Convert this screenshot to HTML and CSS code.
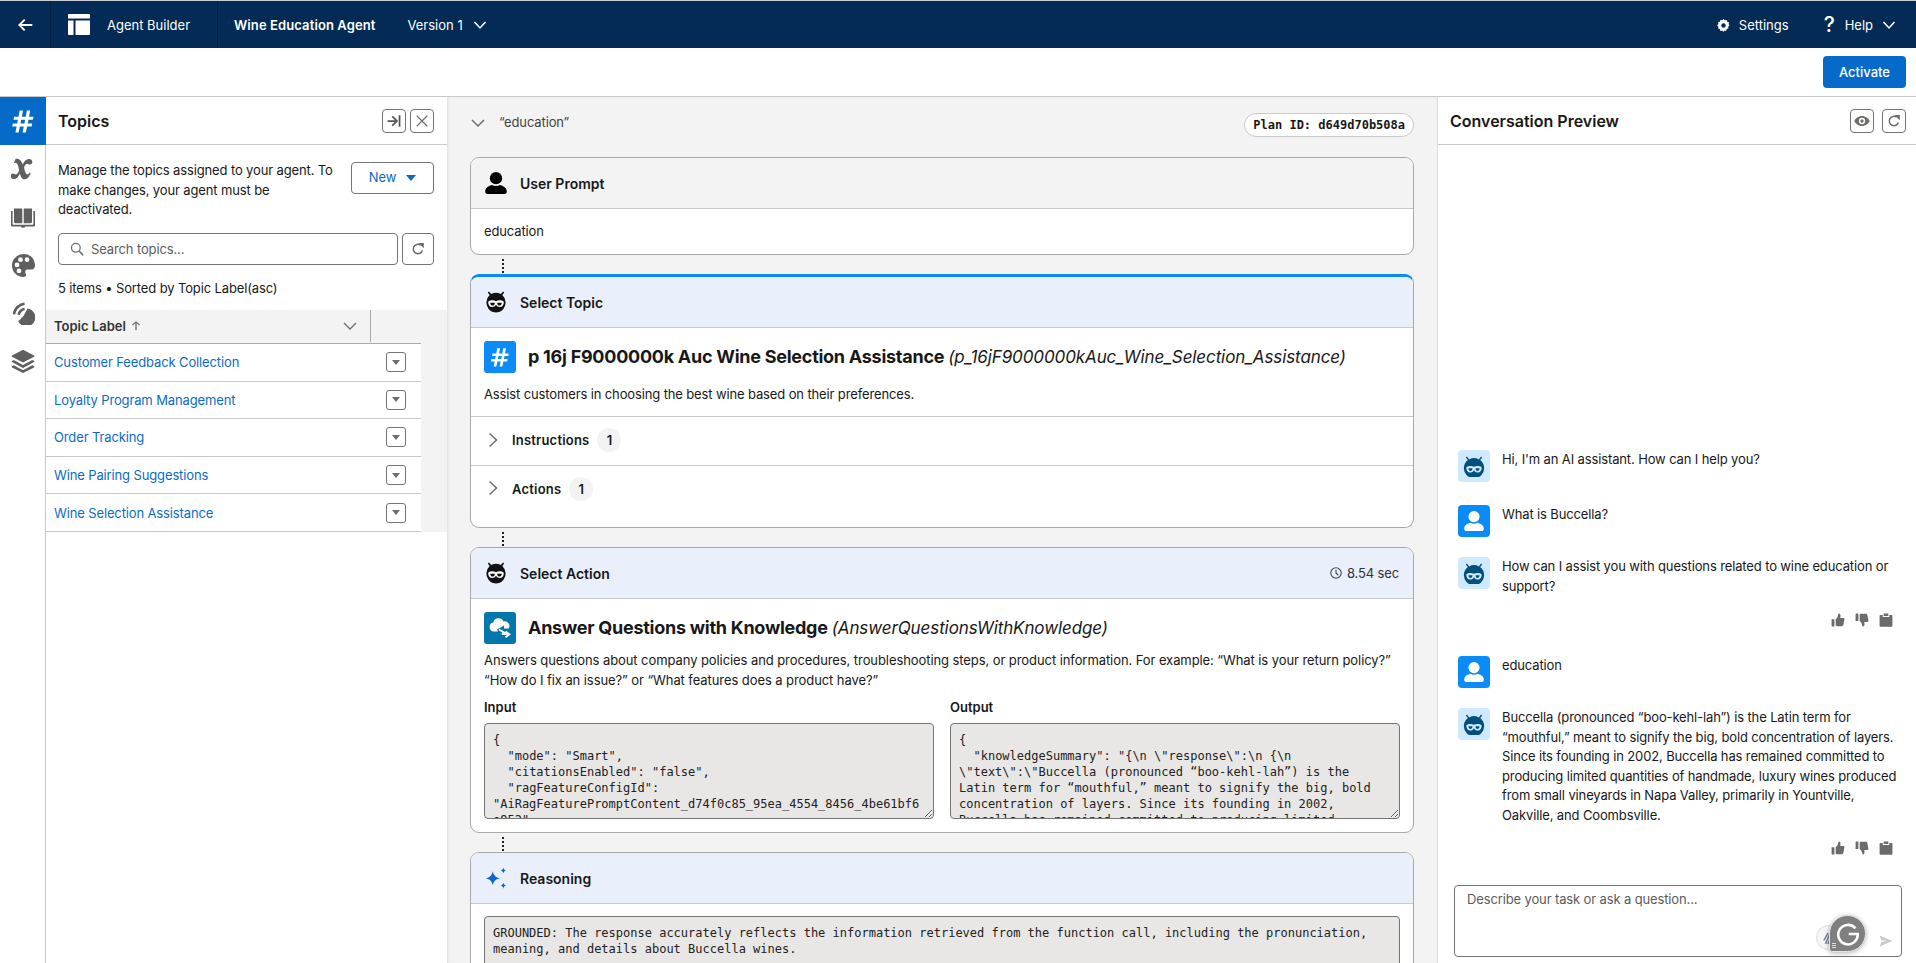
FILE: index.html
```html
<!DOCTYPE html>
<html lang="en">
<head>
<meta charset="utf-8">
<title>Agent Builder</title>
<link rel="stylesheet" href="styles.css">
</head>
<body>
<svg class="defs" width="0" height="0" aria-hidden="true">
  <symbol id="i-bot" viewBox="1 1 22 23">
    <path d="M4.600 1.600 7 4.200a10.400 10.400 0 0 1 10 0l2.400-2.600 1.200 1-2 2.700A10.600 10.600 0 0 1 12 23.600 10.600 10.600 0 0 1 5.400 5.300l-2-2.700z" fill="#111"/>
    <path d="M3.800 12.200c2.400-1.800 5.600-1.800 8.200-.6 2.600-1.200 5.800-1.200 8.200.6-.1 3.400-1.500 5.600-4.200 5.600-1.800 0-3-1-4-2.400-1 1.400-2.200 2.400-4 2.400-2.700 0-4.100-2.200-4.200-5.600z" fill="#fff"/>
    <path d="M6 13.200h4.800c0 1.800-1 3-2.400 3S6 15 6 13.200zm7.200 0H18c0 1.800-1 3-2.400 3s-2.400-1.200-2.400-3z" fill="#111"/>
  </symbol>
  <symbol id="i-bot-blue" viewBox="2 2 20 20">
    <path d="M5.600 3.400 7.600 6a9 9 0 0 1 8.800 0l2-2.600 1 .8-1.800 2.400A9.200 9.200 0 1 1 6.400 6.600L4.600 4.200z" fill="#04507d"/>
    <path d="M5 13.200c2-1.500 4.600-1.500 7-.5 2.400-1 5-1 7 .5 0 2.800-1.200 4.800-3.500 4.800-1.600 0-2.700-.9-3.500-2.100-.8 1.200-1.900 2.100-3.500 2.100C6.200 18 5 16 5 13.200z" fill="#cfe9fe"/>
    <path d="M7 14h3.600c0 1.500-.8 2.500-1.800 2.500S7 15.500 7 14zm6.400 0H17c0 1.500-.8 2.500-1.800 2.500s-1.800-1-1.800-2.500z" fill="#04507d"/>
  </symbol>
  <symbol id="i-person" viewBox="1.500 2 21 21.500">
    <circle cx="12" cy="8" r="6"/>
    <path d="M1.500 20.500c0-3.600 5-5.500 6.700-5.800 2.300 1.400 5.300 1.400 7.600 0 1.700.3 6.700 2.200 6.700 5.800v.8c0 1.300-1 2.200-2.200 2.200H3.700c-1.200 0-2.200-.9-2.200-2.200z"/>
  </symbol>
  <symbol id="i-hash" viewBox="0 0 24 24">
    <path d="M8.700 1.500h3.300L10.800 7.700h3.900l1.200-6.200h3.300L18 7.700h4.500l-.6 3H17.400l-.7 3.700h4.500l-.6 3h-4.500l-1.300 6.100h-3.300l1.200-6.100H8.900l-1.300 6.100H4.400l1.200-6.100H1.200l.6-3h4.400l.7-3.700H2.500l.6-3h4.400zm1.500 9.200-.7 3.700h3.900l.7-3.700z"/>
  </symbol>
  <symbol id="i-fx" viewBox="0 0 24 24">
    <path d="M4.700 1.800c3.700-.6 5.800 1.900 7 5.700 1.400-3.100 3.700-5.400 6.100-5.400 2.200 0 3.500 1.300 3.500 3 0 1.500-1 2.500-2.300 2.500-1.400 0-1.900-.9-2.900-.9-1.300 0-2.500 2.200-3.100 3.600.6 2.800 1.500 7.100 3.500 7.100.8 0 1.500-.9 2-2l1.200.6c-1.100 3.300-3.300 6.300-6.300 6.300-2.700 0-3.700-2.900-4.500-5.800-1.300 3-3.400 5.600-6 5.600-2 0-3.300-1.300-3.300-3 0-1.500 1-2.500 2.300-2.500 1.500 0 1.800 1 2.900 1 1.400 0 2.800-2.800 3.300-4.200-.7-3.700-1.300-7.600-3.600-7.600-.9 0-1.300.4-1.900.8z"/>
  </symbol>
  <symbol id="i-book" viewBox="0 0 24 24">
    <path d="M3 3.500h7c.9 0 1.300.5 1.300 1.200v13.500H4.200c-.7 0-1.200-.5-1.200-1.200zm18 0h-7c-.9 0-1.300.5-1.300 1.200v13.500h7.100c.7 0 1.200-.5 1.200-1.200z"/>
    <path d="M0 6h1.600v12.700c0 .6.400 1 1 1h18.800c.6 0 1-.4 1-1V6H24v14c0 1-.7 1.500-1.500 1.500h-8.300c-.2.800-.5 1.200-1.200 1.200h-2c-.7 0-1-.4-1.200-1.200H1.500C.7 21.500 0 21 0 20z"/>
  </symbol>
  <symbol id="i-palette" viewBox="0 0 24 24">
    <path fill-rule="evenodd" d="M13 1C6 1 1 6.200 1 12.500S6 24 12.300 24c2.700 0 3.300-1.900 2.400-3.400-1.100-1.900-.3-4.100 2-4.100h3.800c2 0 3.500-1.700 3.500-3.800C24 6 19.500 1 13 1zM6 14.300a2.400 2.400 0 1 1 0-4.800 2.400 2.400 0 0 1 0 4.800zm2 6a2.400 2.400 0 1 1 0-4.800 2.400 2.400 0 0 1 0 4.800zm1.500-11.200a2.400 2.400 0 1 1 0-4.800 2.400 2.400 0 0 1 0 4.800zm6.500 0a2.400 2.400 0 1 1 0-4.800 2.400 2.400 0 0 1 0 4.800z"/>
  </symbol>
  <symbol id="i-signal" viewBox="0 0 24 24">
    <path d="M16.500 7.500a9 9 0 1 1-9.300 12.800c1.500-1.200 3.200-3 5.300-5.200z"/>
    <path d="M1.700 13.200C2.400 6.800 7.200 2.200 13.400 1.400l.3 2.500C8.700 4.700 5 8.300 4.300 13.500zm4.700.5c.6-3.700 3.300-6.400 7-7l.4 2.500c-2.500.4-4.300 2.200-4.800 4.900z"/>
  </symbol>
  <symbol id="i-layers" viewBox="0 0 24 24">
    <path d="M12 .8 23 6.600c.5.300.5.900 0 1.200l-11 5.800L1 7.800c-.5-.3-.5-.9 0-1.200z"/>
    <path d="m2.700 11 9.300 4.900 9.300-4.900 1.700.9c.5.300.5.900 0 1.200L12 19 1 13.100c-.5-.3-.5-.9 0-1.200z"/>
    <path d="m2.700 16.300 9.300 4.900 9.300-4.900 1.700.9c.5.300.5.900 0 1.200L12 24 1 18.400c-.5-.3-.5-.9 0-1.200z"/>
  </symbol>
  <symbol id="i-refresh" viewBox="0 0 24 24">
    <path fill="none" stroke="currentColor" stroke-width="2.600" d="M19.500 14.500A8 8 0 1 1 16.500 5.500"/>
    <path d="M13 1.500h9v9z"/>
  </symbol>
  <symbol id="i-up" viewBox="0 0 24 24">
    <path d="M13.600 4.900v17.400h-3.200V4.900L4.700 10.600 2.500 8.300 12 .8l9.500 7.500-2.200 2.300z"/>
  </symbol>
  <symbol id="i-thumbup" viewBox="0 0 24 24">
    <path d="M1 10.500h3.800c.6 0 1 .4 1 1V22c0 .6-.4 1-1 1H2c-.6 0-1-.4-1-1zM8 10.300c2-1 4-3.700 4.600-8.300.1-.8.600-1.200 1.300-1.100 2 .3 2.700 2.400 2.300 5.100l-.4 2.500H21c1.400 0 2.300 1.200 2 2.500l-1.900 9.700c-.3 1.200-1.200 2-2.400 2H10c-1.100 0-2-.9-2-2z"/>
  </symbol>
  <symbol id="i-thumbdown" viewBox="0 0 24 24">
    <path d="M1 13.500h3.800c.6 0 1-.4 1-1V2c0-.6-.4-1-1-1H2c-.6 0-1 .4-1 1zM8 13.700c2 1 4 3.700 4.600 8.300.1.800.6 1.200 1.300 1.100 2-.3 2.700-2.400 2.300-5.100l-.4-2.500H21c1.400 0 2.300-1.200 2-2.500l-1.900-9.700c-.3-1.200-1.200-2-2.400-2H10c-1.100 0-2 .9-2 2z"/>
  </symbol>
  <symbol id="i-clip" viewBox="0 0 24 24">
    <path d="M8 .8h8v4.400H8z"/>
    <path d="M2.500 3.500h3.900v3.300h11.200V3.500h3.900c.9 0 1.500.6 1.500 1.500v17c0 .9-.6 1.500-1.500 1.500H2.500C1.600 23.500 1 22.900 1 22V5c0-.9.600-1.500 1.500-1.500z"/>
  </symbol>
</svg>

<header class="topbar">
  <button class="back" type="button" aria-label="Back">
    <svg class="ico-16" viewBox="0 0 24 24"><path d="M23 12H4m7.500-8L3.500 12l8 8" fill="none" stroke="#fff" stroke-width="2.800"/></svg>
  </button>
  <div class="brand">
    <svg class="brand-logo" viewBox="0 0 22 21"><path d="M1 0h20c.6 0 1 .4 1 1v3.500H0V1c0-.6.400-1 1-1zM0 6.500h5.500V21H1c-.6 0-1-.4-1-1zm7.500 0H22V20c0 .6-.4 1-1 1H7.500z" fill="#fff"/></svg>
    <span>Agent Builder</span>
  </div>
  <div class="agent">
    <strong>Wine Education Agent</strong>
    <span class="version">Version 1</span>
    <svg class="chev-w" viewBox="0 0 14 14"><path d="M1.500 4 7 10l5.500-6" fill="none" stroke="#fff" stroke-width="1.500"/></svg>
  </div>
  <div class="top-right">
    <span class="top-item">
      <svg class="ico-13" viewBox="0 0 24 24"><path fill="#fff" fill-rule="evenodd" d="M12 0l2.600 2.800 3.700-.9 1.100 3.700 3.600 1.100-.8 3.700L24 13l-2.800 2.600.8 3.700-3.600 1.100-1.100 3.600-3.700-.9L12 26l-2.600-2.900-3.700.9-1.100-3.600L1 19.300l.8-3.700L-1 13l2.800-2.600-.8-3.700 3.600-1.100L5.700 1.900l3.700.9zM12 8.500a4.500 4.500 0 1 0 0 9 4.500 4.500 0 0 0 0-9z" transform="translate(1 .8) scale(.92)"/></svg>
      Settings
    </span>
    <span class="top-item top-help">
      <span class="qmark">?</span>
      Help
      <svg class="chev-w chev-help" viewBox="0 0 14 14"><path d="M1.500 4 7 10l5.500-6" fill="none" stroke="#fff" stroke-width="1.500"/></svg>
    </span>
  </div>
</header>

<div class="actionbar">
  <button class="primary" type="button">Activate</button>
</div>

<main class="workspace">
  <nav class="rail">
    <a class="rail-item rail-active"><svg class="ico-24"><use href="#i-hash"/></svg></a>
    <a class="rail-item"><svg class="ico-24"><use href="#i-fx"/></svg></a>
    <a class="rail-item"><svg class="ico-24"><use href="#i-book"/></svg></a>
    <a class="rail-item"><svg class="ico-24"><use href="#i-palette"/></svg></a>
    <a class="rail-item"><svg class="ico-24"><use href="#i-signal"/></svg></a>
    <a class="rail-item"><svg class="ico-24"><use href="#i-layers"/></svg></a>
  </nav>

  <aside class="topics">
    <div class="panel-head panel-head-topics">
      <h2>Topics</h2>
      <div class="icon-btns">
        <button class="icon-btn" type="button" aria-label="Collapse">
          <svg class="ico-14" viewBox="0 0 24 24"><path d="M1 12h15m-7-8 8 8-8 8M21.500 2v20" fill="none" stroke="#555" stroke-width="3"/></svg>
        </button>
        <button class="icon-btn" type="button" aria-label="Close">
          <svg class="ico-14" viewBox="0 0 24 24"><path d="m3 3 18 18M21 3 3 21" fill="none" stroke="#706e6b" stroke-width="2"/></svg>
        </button>
      </div>
    </div>
    <div class="intro">
      <p>Manage the topics assigned to your agent. To make changes, your agent must be deactivated.</p>
      <button class="new-btn" type="button">New <span class="caret-blue"></span></button>
    </div>
    <div class="search-row">
      <label class="search">
        <svg class="ico-14" viewBox="0 0 24 24"><circle cx="10" cy="10" r="7.500" fill="none" stroke="#706e6b" stroke-width="2.200"/><path d="m15.500 15.500 7 7" stroke="#706e6b" stroke-width="2.600"/></svg>
        <span>Search topics...</span>
      </label>
      <button class="refresh-btn" type="button" aria-label="Refresh"><svg class="ico-14 gray"><use href="#i-refresh"/></svg></button>
    </div>
    <p class="summary">5 items • Sorted by Topic Label(asc)</p>
    <div class="table">
      <div class="thead">
        <div class="th">
          <span class="th-label">Topic Label</span>
          <svg class="ico-up gray"><use href="#i-up"/></svg>
          <svg class="th-chev" viewBox="0 0 14 14"><path d="M1 4 7 10l6-6" fill="none" stroke="#706e6b" stroke-width="1.300"/></svg>
        </div>
      </div>
      <ul class="rows">
        <li class="row"><a>Customer Feedback Collection</a><button class="menu-btn" type="button" aria-label="Show actions"><span class="caret-gray"></span></button></li>
        <li class="row"><a>Loyalty Program Management</a><button class="menu-btn" type="button" aria-label="Show actions"><span class="caret-gray"></span></button></li>
        <li class="row"><a>Order Tracking</a><button class="menu-btn" type="button" aria-label="Show actions"><span class="caret-gray"></span></button></li>
        <li class="row"><a>Wine Pairing Suggestions</a><button class="menu-btn" type="button" aria-label="Show actions"><span class="caret-gray"></span></button></li>
        <li class="row"><a>Wine Selection Assistance</a><button class="menu-btn" type="button" aria-label="Show actions"><span class="caret-gray"></span></button></li>
      </ul>
    </div>
  </aside>

  <section class="trace">
    <div class="trace-head">
      <svg class="th-chev dark" viewBox="0 0 14 14"><path d="M1 4 7 10l6-6" fill="none" stroke="#706e6b" stroke-width="1.500"/></svg>
      <span class="trace-q">“education”</span>
      <span class="plan">Plan ID: d649d70b508a</span>
    </div>

    <article class="card">
      <div class="card-head head-gray">
        <svg class="ico-22"><use href="#i-person"/></svg>
        <h3>User Prompt</h3>
      </div>
      <div class="prompt-body">education</div>
    </article>
    <div class="link"></div>

    <article class="card card-active">
      <div class="card-head">
        <svg class="ico-22"><use href="#i-bot"/></svg>
        <h3>Select Topic</h3>
      </div>
      <div class="card-title">
        <span class="tile tile-blue"><svg class="ico-20 white"><use href="#i-hash"/></svg></span>
        <h4>p 16j F9000000k Auc Wine Selection Assistance <em>(p_16jF9000000kAuc_Wine_Selection_Assistance)</em></h4>
      </div>
      <p class="card-desc">Assist customers in choosing the best wine based on their preferences.</p>
      <div class="acc acc-first">
        <svg class="acc-chev" viewBox="0 0 10 16"><path d="m1.500 1.500 7 6.500-7 6.500" fill="none" stroke="#706e6b" stroke-width="1.500"/></svg>
        <span class="acc-label">Instructions</span><span class="pill">1</span>
      </div>
      <div class="acc acc-last">
        <svg class="acc-chev" viewBox="0 0 10 16"><path d="m1.500 1.500 7 6.500-7 6.500" fill="none" stroke="#706e6b" stroke-width="1.500"/></svg>
        <span class="acc-label">Actions</span><span class="pill">1</span>
      </div>
    </article>
    <div class="link"></div>

    <article class="card">
      <div class="card-head">
        <svg class="ico-22"><use href="#i-bot"/></svg>
        <h3>Select Action</h3>
        <span class="timing">
          <svg class="ico-12" viewBox="0 0 24 24"><circle cx="12" cy="12" r="10.500" fill="none" stroke="#444" stroke-width="2.200"/><path d="M12 5.500V12l4.500 4.500" fill="none" stroke="#444" stroke-width="2.200"/></svg>
          8.54 sec
        </span>
      </div>
      <div class="card-title">
        <span class="tile tile-teal">
          <svg class="ico-24" viewBox="0 0 24 24"><path d="M6 15.500a4.500 4.500 0 0 1-.8-8.900A5.500 5.500 0 0 1 15.500 5.400a4.800 4.800 0 0 1 6 4.600 4.200 4.200 0 0 1-.8 2.500H16V9.500l-7 4 1 2z" fill="#fff"/><path d="m11 13.500 5.500 3.200-2.500 1.300h7M17.500 15.500l4 2.800-4 3" fill="none" stroke="#fff" stroke-width="1.800"/></svg>
        </span>
        <h4>Answer Questions with Knowledge <em>(AnswerQuestionsWithKnowledge)</em></h4>
      </div>
      <p class="card-desc desc-wide">Answers questions about company policies and procedures, troubleshooting steps, or product information. For example: “What is your return policy?” “How do I fix an issue?” or “What features does a product have?”</p>
      <div class="io">
        <div class="io-col">
          <label class="io-label">Input</label>
          <div class="code">{
  "mode": "Smart",
  "citationsEnabled": "false",
  "ragFeatureConfigId":
"AiRagFeaturePromptContent_d74f0c85_95ea_4554_8456_4be61bf6e952",
  "retrieverMode": "Smart"
}</div>
        </div>
        <div class="io-col">
          <label class="io-label">Output</label>
          <div class="code">{
  "knowledgeSummary": "{\n \"response\":\n {\n \"text\":\"Buccella (pronounced “boo-kehl-lah”) is the Latin term for “mouthful,” meant to signify the big, bold concentration of layers. Since its founding in 2002, Buccella has remained committed to producing limited quantities of handmade wines"
}</div>
        </div>
      </div>
    </article>
    <div class="link"></div>

    <article class="card">
      <div class="card-head">
        <svg class="ico-22" viewBox="0 0 24 24"><path fill="#0a66c8" d="M8.500 4.500c1 4.600 3 6.700 7.800 7.700-4.800 1-6.800 3.100-7.800 7.800-1-4.700-3-6.800-7.800-7.800 4.800-1 6.800-3.100 7.800-7.700zM20 .5c.4 2 1.200 2.900 3.200 3.300-2 .4-2.800 1.300-3.200 3.300-.4-2-1.200-2.900-3.200-3.300 2-.4 2.800-1.300 3.200-3.300zM20 17c.4 2 1.200 2.900 3.200 3.300-2 .4-2.800 1.300-3.200 3.300-.4-2-1.200-2.900-3.200-3.300 2-.4 2.800-1.300 3.200-3.300z"/></svg>
        <h3>Reasoning</h3>
      </div>
      <div class="reason">
        <div class="code code-full">GROUNDED: The response accurately reflects the information retrieved from the function call, including the pronunciation, meaning, and details about Buccella wines.</div>
      </div>
    </article>
  </section>

  <aside class="preview">
    <div class="panel-head panel-head-preview">
      <h2>Conversation Preview</h2>
      <div class="icon-btns icon-btns-wide">
        <button class="icon-btn" type="button" aria-label="Preview">
          <svg class="ico-16" viewBox="0 0 24 24"><path fill="#706e6b" fill-rule="evenodd" d="M12 4.500c5.500 0 9.800 3.600 11.500 7.500-1.700 3.900-6 7.500-11.500 7.500S2.200 15.900.5 12C2.200 8.100 6.500 4.500 12 4.500zm0 2.800a4.700 4.700 0 1 0 0 9.400 4.700 4.700 0 0 0 0-9.400zm0 2.200a2.500 2.500 0 1 1 0 5 2.500 2.500 0 0 1 0-5z"/></svg>
        </button>
        <button class="icon-btn" type="button" aria-label="Refresh"><svg class="ico-14 gray"><use href="#i-refresh"/></svg></button>
      </div>
    </div>
    <div class="chat">
      <div class="msg msg-1">
        <span class="avatar av-bot"><svg class="ico-22"><use href="#i-bot-blue"/></svg></span>
        <p>Hi, I'm an AI assistant. How can I help you?</p>
      </div>
      <div class="msg msg-2">
        <span class="avatar av-user"><svg class="ico-20 white"><use href="#i-person"/></svg></span>
        <p>What is Buccella?</p>
      </div>
      <div class="msg">
        <span class="avatar av-bot"><svg class="ico-22"><use href="#i-bot-blue"/></svg></span>
        <p>How can I assist you with questions related to wine education or support?</p>
      </div>
      <div class="feedback">
        <svg class="ico-14 gray"><use href="#i-thumbup"/></svg>
        <svg class="ico-14 gray"><use href="#i-thumbdown"/></svg>
        <svg class="ico-14 gray"><use href="#i-clip"/></svg>
      </div>
      <div class="msg msg-4">
        <span class="avatar av-user"><svg class="ico-20 white"><use href="#i-person"/></svg></span>
        <p>education</p>
      </div>
      <div class="msg">
        <span class="avatar av-bot"><svg class="ico-22"><use href="#i-bot-blue"/></svg></span>
        <p>Buccella (pronounced “boo-kehl-lah”) is the Latin term for “mouthful,” meant to signify the big, bold concentration of layers. Since its founding in 2002, Buccella has remained committed to producing limited quantities of handmade, luxury wines produced from small vineyards in Napa Valley, primarily in Yountville, Oakville, and Coombsville.</p>
      </div>
      <div class="feedback feedback-last">
        <svg class="ico-14 gray"><use href="#i-thumbup"/></svg>
        <svg class="ico-14 gray"><use href="#i-thumbdown"/></svg>
        <svg class="ico-14 gray"><use href="#i-clip"/></svg>
      </div>
    </div>
    <div class="composer">
      <span class="placeholder">Describe your task or ask a question...</span>
      <svg class="send" viewBox="0 0 24 24"><path d="M1 2.500 23 12 1 21.500l3-8 10-1.500-10-1.500z" fill="#c9c9c9"/></svg>
      <span class="g-back"><svg class="g-slash" viewBox="0 0 12 16"><path d="M9 1 3 15M11 4 6 15M6 2 1 11" fill="none" stroke="#6f7f93" stroke-width="1.800"/></svg></span>
      <span class="g-badge"><svg class="g-mark" viewBox="0 0 32 32"><path d="M26 8.500A13 13 0 1 0 29 16H17" fill="none" stroke="#fff" stroke-width="3.400"/></svg><span class="g-grip"></span></span>
    </div>
  </aside>
</main>
</body>
</html>
```

FILE: styles.css
```css
* { box-sizing: border-box; }
html, body { height: 100%; }
body {
  margin: 0;
  overflow: hidden;
  background: #fff;
  color: #181818;
  font-family: Inter, "Liberation Sans", sans-serif;
  font-size: 13px;
  letter-spacing: -0.13px;
  display: flex;
  flex-direction: column;
}
p, h2, h3, h4, ul { margin: 0; padding: 0; }
ul { list-style: none; }
button { font: inherit; letter-spacing: inherit; cursor: pointer; padding: 0; }
svg { display: block; flex: none; }
.defs { position: absolute; }
.gray { fill: #6b6b6b; color: #6b6b6b; }
.white { fill: #fff; }
.ico-12 { width: 12px; height: 12px; }
.ico-13 { width: 13px; height: 14px; }
.ico-14 { width: 14px; height: 14px; }
.ico-16 { width: 16px; height: 16px; }
.ico-20 { width: 20px; height: 20px; }
.ico-22 { width: 22px; height: 22px; }
.ico-24 { width: 24px; height: 24px; }

/* top bar */
.topbar {
  flex: none;
  height: 48px;
  background: #032b55;
  border-top: 1px solid #c9ced6;
  color: #fff;
  letter-spacing: 0;
  display: flex;
  align-items: center;
}
.back {
  width: 51px;
  height: 100%;
  border: 0;
  border-right: 1px solid #02203f;
  background: none;
  display: flex;
  align-items: center;
  justify-content: center;
}
.brand {
  width: 167px;
  height: 100%;
  display: flex;
  align-items: center;
  gap: 17px;
  padding-left: 17px;
  border-right: 1px solid #02203f;
}
.brand-logo { width: 22px; height: 21px; }
.agent {
  display: flex;
  align-items: center;
  padding-left: 16px;
}
.agent strong { font-weight: 600; letter-spacing: .1px; }
.version { margin-left: 32px; }
.chev-w { width: 14px; height: 14px; margin-left: 10px; }
.chev-help { margin-left: 9px; }
.top-right {
  margin-left: auto;
  display: flex;
  align-items: center;
  padding-right: 20px;
}
.top-item { display: flex; align-items: center; gap: 9px; }
.top-help { margin-left: 35px; gap: 0; }
.qmark { font-size: 21px; margin-right: 10px; font-weight: 500; width: 11px; }

/* action bar */
.actionbar {
  flex: none;
  height: 49px;
  display: flex;
  align-items: center;
  justify-content: flex-end;
  padding-right: 10px;
  border-bottom: 1px solid #c9c9c9;
}
.primary {
  width: 83px;
  height: 32px;
  border: 0;
  border-radius: 4px;
  background: #066ac9;
  color: #fff;
  font-weight: 500;
  letter-spacing: 0;
}

/* workspace */
.workspace { flex: 1; min-height: 0; display: flex; }
.rail {
  width: 46px;
  flex: none;
  border-right: 1px solid #c9c9c9;
}
.rail-item {
  height: 48px;
  display: flex;
  align-items: center;
  justify-content: center;
  fill: #5f5f5f;
}
.rail-active { background: #066ac9; fill: #fff; margin-right: -1px; }

/* shared panel head */
.panel-head {
  height: 48px;
  display: flex;
  align-items: center;
  justify-content: space-between;
  padding: 0 12px;
  border-bottom: 1px solid #c9c9c9;
}
.panel-head-topics { padding-right: 13px; }
.panel-head h2 { font-size: 16px; font-weight: 600; letter-spacing: 0; }
.icon-btns { display: flex; gap: 4px; }
.icon-btns-wide { gap: 8px; }
.icon-btn {
  width: 24px;
  height: 24px;
  background: #fff;
  border: 1px solid #747474;
  border-radius: 4px;
  display: flex;
  align-items: center;
  justify-content: center;
}

/* topics */
.topics { width: 401px; flex: none; }
.intro {
  display: flex;
  justify-content: space-between;
  gap: 12px;
  padding: 16px 13px 0 12px;
  line-height: 19.500px;
}
.intro p { flex: 1; }
.new-btn {
  flex: none;
  width: 83px;
  height: 32px;
  margin-top: 1px;
  background: #fff;
  color: #066ac9;
  border: 1px solid #747474;
  border-radius: 4px;
  display: flex;
  align-items: center;
  justify-content: center;
  gap: 10px;
}
.caret-blue {
  width: 0;
  height: 0;
  border: 5px solid transparent;
  border-top: 6px solid #066ac9;
  border-bottom: 0;
}
.search-row {
  display: flex;
  gap: 4px;
  padding: 13.500px 13px 0 12px;
}
.search {
  flex: 1;
  height: 32px;
  border: 1px solid #747474;
  border-radius: 4px;
  display: flex;
  align-items: center;
  gap: 7px;
  padding-left: 11px;
  color: #5c5c5c;
}
.refresh-btn {
  width: 32px;
  height: 32px;
  background: #fff;
  border: 1px solid #747474;
  border-radius: 4px;
  display: flex;
  align-items: center;
  justify-content: center;
}
.summary { padding: 15px 12px 0; line-height: 16px; }
.table { margin-top: 14px; background: #f3f3f3; }
.thead { height: 33px; }
.th {
  width: 325px;
  height: 32px;
  display: flex;
  align-items: center;
  padding-left: 8px;
  border-right: 1px solid #a9a9a9;
}
.th-label { font-weight: 600; color: #333; letter-spacing: 0; }
.ico-up { width: 10px; height: 12px; margin-left: 5px; }
.th-chev { width: 14px; height: 14px; margin-left: auto; margin-right: 13px; }
.rows { width: 375px; background: #fff; border-top: 1px solid #a9a9a9; }
.row {
  height: 37.600px;
  display: flex;
  align-items: center;
  justify-content: space-between;
  padding: 0 15px 0 8px;
  border-bottom: 1px solid #c9c9c9;
  color: #0a6cc9;
}
.menu-btn {
  width: 20px;
  height: 20px;
  background: #fff;
  border: 1px solid #747474;
  border-radius: 3px;
  display: flex;
  align-items: center;
  justify-content: center;
}
.caret-gray {
  width: 0;
  height: 0;
  border: 4.500px solid transparent;
  border-top: 5px solid #706e6b;
  border-bottom: 0;
}

/* trace */
.trace {
  flex: 1;
  min-width: 0;
  background: #f3f3f3;
  box-shadow: inset 3px 0 3px -2px #ddd;
  padding: 0 23px;
  overflow: hidden;
}
.trace-head {
  height: 60px;
  display: flex;
  align-items: center;
  padding-left: 1px;
  padding-bottom: 10px;
}
.trace-head .th-chev { margin: 2px 0 0; }
.trace-q { margin-left: 14px; color: #444; }
.plan {
  margin-left: auto;
  margin-top: 6px;
  height: 24px;
  padding: 0 8px;
  display: flex;
  align-items: center;
  background: #fff;
  border: 1px solid #c9c9c9;
  border-radius: 12px;
  font: 700 12px "DejaVu Sans Mono", monospace;
  letter-spacing: 0;
}
.card {
  background: #fff;
  border: 1px solid #a8a8a8;
  border-radius: 9px;
  overflow: hidden;
}
.card-active { border-top: 3px solid #0b8bf5; }
.card-head {
  height: 51px;
  padding: 0 14px;
  display: flex;
  align-items: center;
  gap: 13px;
  background: #eaf0fb;
  border-bottom: 1px solid #c4c9d2;
}
.head-gray { background: #f3f3f3; border-bottom-color: #c9c9c9; }
.card-head h3 { font-size: 14px; font-weight: 600; letter-spacing: 0; }
.timing {
  margin-left: auto;
  display: flex;
  align-items: center;
  gap: 5px;
  color: #333;
}
.prompt-body { height: 45px; padding: 14px 13px 0; }
.link {
  width: 2px;
  height: 19px;
  margin-left: 32px;
  background: repeating-linear-gradient(#222 0 2px, transparent 2px 4px);
  background-clip: content-box;
  padding: 2px 0 1px;
}
.card-title {
  display: flex;
  align-items: center;
  gap: 12px;
  padding: 13px 13px 0;
}
.card-title h4 {
  font-size: 18px;
  font-weight: 700;
  line-height: 32px;
  letter-spacing: -0.26px;
  white-space: nowrap;
}
.card-title em { font-weight: 400; font-size: 17px; letter-spacing: -0.1px; }
.tile {
  width: 32px;
  height: 32px;
  border-radius: 3px;
  display: flex;
  align-items: center;
  justify-content: center;
}
.tile-blue { background: #0b8bf5; }
.tile-teal { background: #0277ab; }
.card-desc { padding: 12px 13px 0; line-height: 19.500px; height: 43px; }
.desc-wide { height: 53px; padding: 7px 13px 0; letter-spacing: -0.08px; }
.acc {
  height: 49px;
  display: flex;
  align-items: center;
  padding-left: 17px;
  padding-bottom: 2px;
  border-top: 1px solid #c9c9c9;
}
.acc-last { height: 62px; align-items: flex-start; padding-top: 11px; padding-bottom: 0; }
.acc-chev { width: 10px; height: 16px; }
.acc-last .acc-chev { margin-top: 3px; }
.acc-label { margin-left: 14px; font-weight: 600; letter-spacing: .2px; }
.acc-last .acc-label { margin-top: 4px; }
.pill {
  width: 24px;
  height: 24px;
  margin-left: 8px;
  border-radius: 50%;
  background: #f3f3f3;
  display: flex;
  align-items: center;
  justify-content: center;
  font-weight: 600;
}
.io {
  display: grid;
  grid-template-columns: 450px 450px;
  column-gap: 16px;
  padding: 0 13px 13px;
}
.io-label { display: block; font-weight: 600; height: 26px; line-height: 20px; letter-spacing: 0; }
.code {
  height: 96px;
  padding: 8px 8px 0;
  background: #e8e7e5;
  border: 1px solid #747474;
  border-radius: 4px;
  font: 12px/16px "DejaVu Sans Mono", monospace;
  letter-spacing: 0;
  color: #222;
  white-space: pre-wrap;
  overflow-wrap: anywhere;
  overflow: hidden;
  resize: both;
}
.reason { padding: 12px 13px; }
.code-full { height: 64px; resize: none; }

/* preview */
.preview {
  width: 479px;
  flex: none;
  display: flex;
  flex-direction: column;
  border-left: 1px solid #dcdcdc;
}
.panel-head-preview { padding: 0 10px 0 12px; }
.chat {
  flex: 1;
  min-height: 0;
  display: flex;
  flex-direction: column;
  justify-content: flex-end;
  padding: 0 16px 0 20px;
}
.msg { display: flex; gap: 12px; }
.msg p { flex: 1; line-height: 19.500px; }
.msg-1 { margin-bottom: 23px; }
.msg-2 { margin-bottom: 20px; }
.msg-4 { margin-bottom: 20px; }
.avatar {
  width: 32px;
  height: 32px;
  flex: none;
  border-radius: 4px;
  display: flex;
  align-items: center;
  justify-content: center;
}
.av-bot { background: #cfe9fe; }
.av-user { background: #0b8bf5; }
.feedback {
  height: 14px;
  margin: 17px 0 29px;
  display: flex;
  justify-content: flex-end;
  gap: 10px;
  padding-right: 7px;
}
.feedback-last { margin: 16px 0 30px; }
.composer {
  flex: none;
  position: relative;
  height: 72px;
  margin: 0 14px 6px 16px;
  padding: 5px 12px;
  border: 1px solid #747474;
  border-radius: 4px;
  color: #5c5c5c;
}
.send { position: absolute; right: 8px; bottom: 8px; width: 14px; height: 14px; }
.g-back {
  position: absolute;
  right: 60px;
  bottom: 6px;
  width: 25px;
  height: 25px;
  padding: 5px 0 0 6px;
  border-radius: 50%;
  background: #f6f6f6;
  border: 1px solid #ddd;
}
.g-slash { width: 10px; height: 14px; }
.g-badge {
  position: absolute;
  right: 35px;
  bottom: 4px;
  width: 37px;
  height: 37px;
  border-radius: 50% 50% 50% 3px;
  background: #7f7f7f;
  border: 1px solid #e4e4e4;
  box-shadow: 0 1px 5px rgba(0,0,0,.3);
  display: flex;
  align-items: center;
  justify-content: center;
}
.g-mark { width: 24px; height: 24px; }
.g-grip {
  position: absolute;
  left: 2px;
  bottom: 2px;
  width: 4px;
  height: 6px;
  background: repeating-linear-gradient(#ddd 0 1px, transparent 1px 2px);
}
```
